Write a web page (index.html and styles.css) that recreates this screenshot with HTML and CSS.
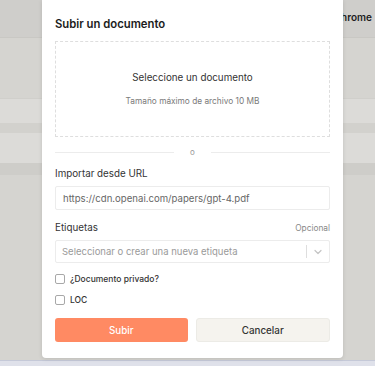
FILE: index.html
```html
<!DOCTYPE html>
<html lang="es">
<head>
    <meta charset="UTF-8">
    <meta name="viewport" content="width=device-width, initial-scale=1.0">
    <title>Subir un documento</title>
    <link rel="stylesheet" href="styles.css">
</head>
<body>

    <!-- Page behind the overlay -->
    <div class="page">
        <div class="page-header">
            <span class="browser-name">Chrome</span>
        </div>
        <div class="page-row row-a"></div>
        <div class="page-row row-b"></div>
        <div class="page-row row-c"></div>
        <div class="page-row row-d"></div>
        <div class="page-row row-e"></div>
        <div class="page-rest"></div>
        <div class="page-footer"></div>
    </div>

    <!-- Upload modal -->
    <div class="modal" role="dialog" aria-labelledby="modalTitle">
        <h2 id="modalTitle" class="modal-title">Subir un documento</h2>

        <div class="dropzone">
            <p class="dropzone-title">Seleccione un documento</p>
            <p class="dropzone-hint">Tamaño máximo de archivo 10 MB</p>
        </div>

        <div class="divider"><span>o</span></div>

        <label class="field-label" for="urlInput">Importar desde URL</label>
        <input class="text-input" id="urlInput" type="text" placeholder="https://cdn.openai.com/papers/gpt-4.pdf">

        <div class="label-row">
            <span class="field-label">Etiquetas</span>
            <span class="optional">Opcional</span>
        </div>
        <div class="select">
            <span class="select-placeholder">Seleccionar o crear una nueva etiqueta</span>
            <span class="select-sep"></span>
            <svg class="select-chevron" width="10" height="10" viewBox="0 0 10 10">
                <path d="M2 3.5 L5 6.5 L8 3.5" fill="none" stroke="#c4c4c4" stroke-width="1.2" stroke-linecap="round" stroke-linejoin="round"/>
            </svg>
        </div>

        <label class="check-row check-first">
            <span class="check-box"></span>
            <span>¿Documento privado?</span>
        </label>
        <label class="check-row">
            <span class="check-box"></span>
            <span>LOC</span>
        </label>

        <div class="actions">
            <button class="btn btn-primary">Subir</button>
            <button class="btn btn-secondary">Cancelar</button>
        </div>
    </div>

</body>
</html>
```

FILE: styles.css
```css
/* Reset and Base Styles */
* {
    margin: 0;
    padding: 0;
    box-sizing: border-box;
}

body {
    width: 375px;
    height: 366px;
    overflow: hidden;
    background-color: #d5d4d0;
    font-family: Inter, "Noto Sans", sans-serif;
    position: relative;
}

/* Dimmed page behind the modal */
.page {
    display: flex;
    flex-direction: column;
    height: 366px;
}

.page-header {
    height: 38px;
    background-color: #cfcecb;
    border-bottom: 1px solid #c9c8c4;
    display: flex;
    justify-content: flex-end;
    padding: 11px 3px 0 0;
}

.browser-name {
    font-size: 10px;
    font-weight: 600;
    color: #1e1e1e;
}

.page-row { flex-shrink: 0; }
.row-a { height: 60px; background-color: #d5d4d0; }
.row-b { height: 25px; background-color: #dcdbd8; border-top: 1px solid #d0cfcb; }
.row-c { height: 10px; background-color: #d2d1cd; }
.row-d { height: 30px; background-color: #dcdbd8; }
.row-e { height: 12px; background-color: #cecdc9; }

.page-rest {
    flex: 1;
    background-color: #d5d4d0;
}

.page-footer {
    height: 6px;
    background-color: #dfe1ea;
    border-top: 1px solid #c5c9d8;
}

/* Modal */
.modal {
    position: absolute;
    top: 0;
    left: 42px;
    width: 301px;
    height: 358px;
    background: #fff;
    border-radius: 0 0 4px 4px;
    box-shadow: 0 1px 4px rgba(0, 0, 0, 0.12);
    padding: 13px 13px 0;
    display: flex;
    flex-direction: column;
}

.modal-title {
    font-size: 11.3px;
    font-weight: 600;
    line-height: 20px;
    padding-top: 1px;
    height: 20px;
    color: #1c1c1c;
}

.dropzone {
    margin-top: 8px;
    height: 96px;
    border: 1px dashed #dedede;
    display: flex;
    flex-direction: column;
    justify-content: center;
    align-items: center;
    gap: 8px;
}

.dropzone-title {
    font-size: 9.8px;
    line-height: 16px;
    color: #333;
}

.dropzone-hint {
    font-size: 8.3px;
    line-height: 14px;
    color: #7a7a7a;
}

.divider {
    margin-top: 8px;
    height: 14px;
    display: flex;
    align-items: center;
    gap: 8px;
    font-size: 8px;
    color: #999;
}

.divider::before,
.divider::after {
    content: "";
    flex: 1;
    border-top: 1px solid #ececec;
}

.divider span {
    padding: 0 8px;
}

.field-label {
    display: block;
    font-size: 9.8px;
    line-height: 16px;
    color: #333;
}

.divider + .field-label {
    margin-top: 7px;
}

.text-input {
    margin-top: 4px;
    height: 24px;
    width: 100%;
    border: 1px solid #ececec;
    border-radius: 2px;
    padding: 0 7px;
    font-family: inherit;
    font-size: 9.6px;
    outline: none;
}

.text-input::placeholder {
    color: #666;
}

.label-row {
    margin-top: 10px;
    display: flex;
    justify-content: space-between;
    align-items: center;
}

.optional {
    font-size: 8.3px;
    color: #888;
}

.select {
    margin-top: 4px;
    height: 23px;
    border: 1px solid #ececec;
    border-radius: 2px;
    display: flex;
    align-items: center;
    padding: 0 6px;
}

.select-placeholder {
    flex: 1;
    font-size: 9.5px;
    color: #9a9a9a;
}

.select-sep {
    width: 1px;
    height: 13px;
    background: #dedede;
    margin-right: 6px;
}

.check-row {
    display: flex;
    align-items: center;
    gap: 5px;
    height: 16px;
    margin-top: 5px;
    font-size: 8.5px;
    font-weight: 500;
    color: #333;
}

.check-first {
    margin-top: 8px;
}

.check-box {
    width: 10px;
    height: 10px;
    border: 1px solid #a8a8a8;
    border-radius: 2px;
    background: #fff;
}

.actions {
    margin-top: 10px;
    display: flex;
    gap: 8px;
}

.btn {
    flex: 1;
    height: 24px;
    border-radius: 3px;
    font-family: inherit;
    font-size: 9.8px;
    font-weight: 500;
    cursor: pointer;
}

.btn-primary {
    border: none;
    background: #ff8a63;
    color: #fff;
}

.btn-secondary {
    border: 1px solid #ecebe6;
    background: #f5f3ee;
    color: #333;
}
```
